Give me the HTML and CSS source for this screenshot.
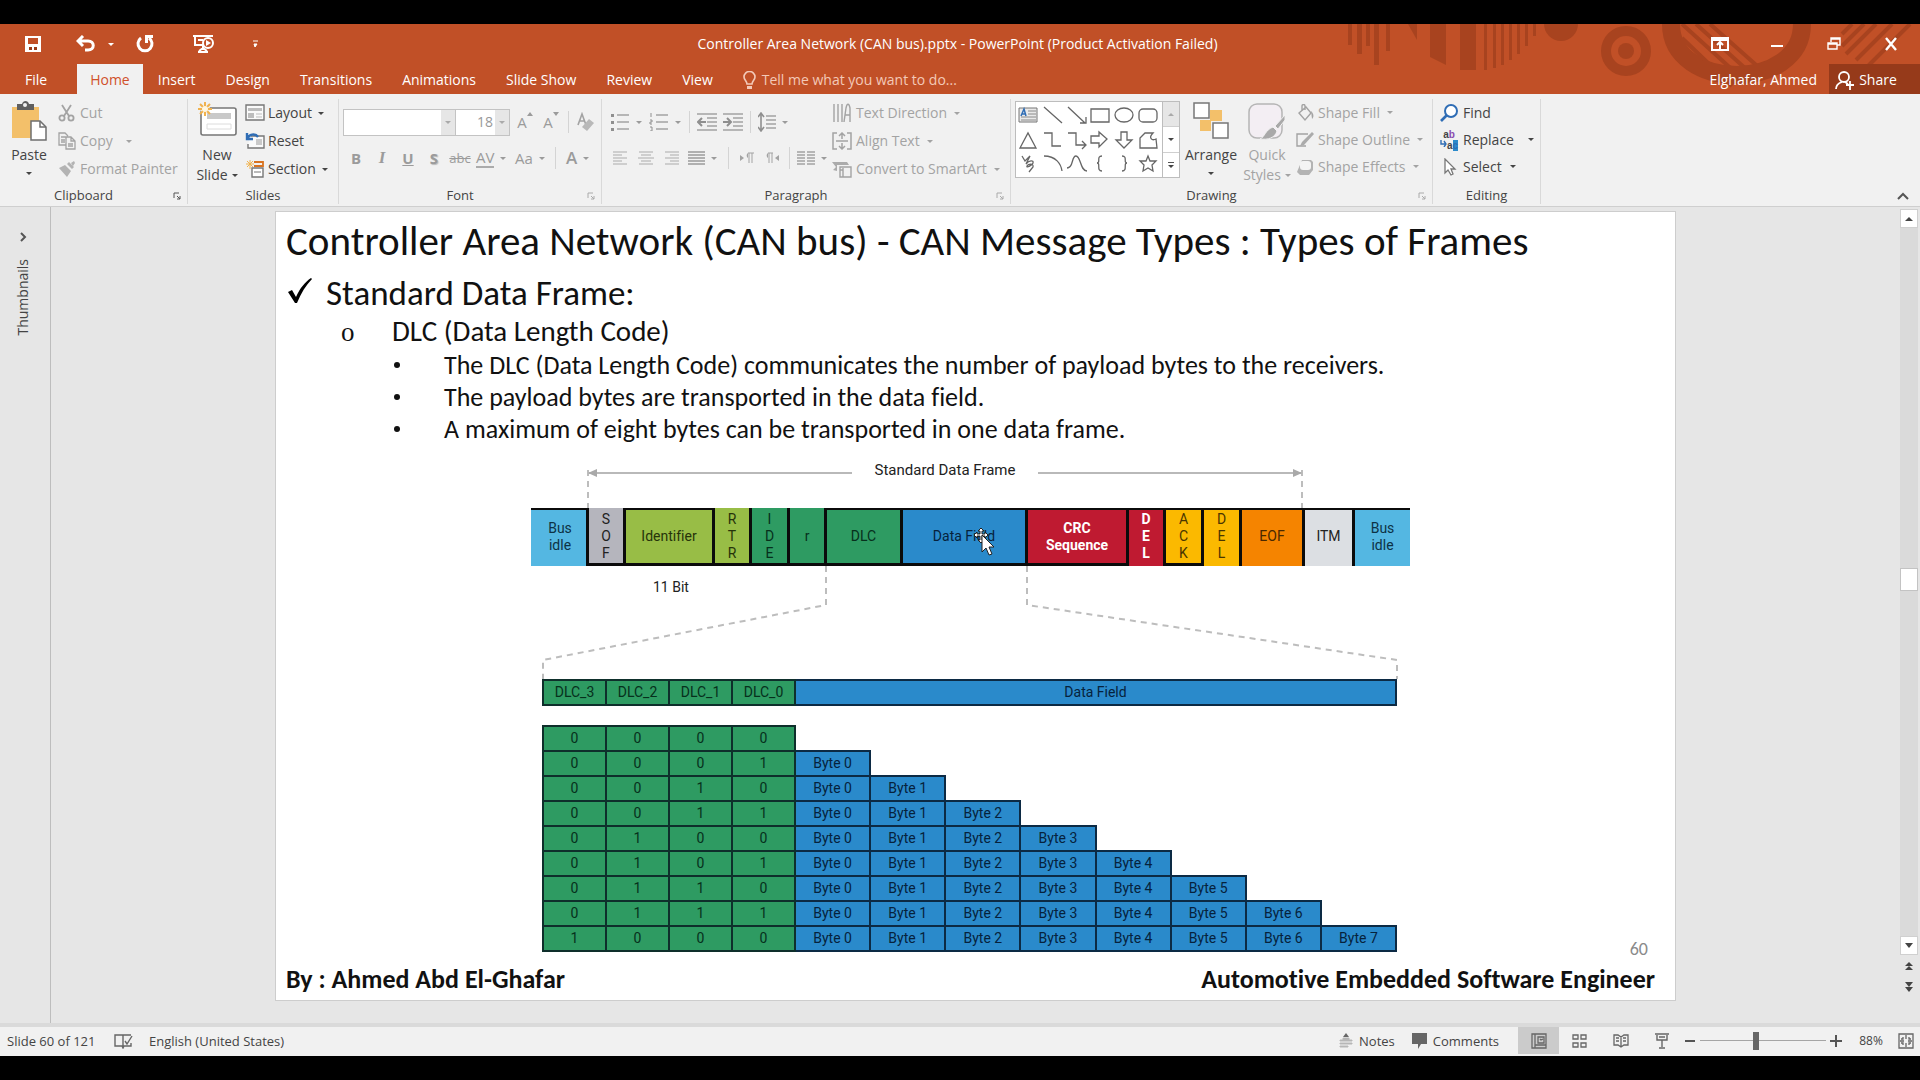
FILE: index.html
```html
<!DOCTYPE html>
<html lang="en">
<head>
<meta charset="utf-8">
<title>Controller Area Network (CAN bus).pptx - PowerPoint</title>
<link rel="stylesheet" href="styles.css">
</head>
<body>
<div class="app">

<header class="top">
  <svg class="art" width="590" height="70" viewBox="0 0 590 70" aria-hidden="true">
    <g fill="#a8431f">
      <path d="M18 0h4v21h-4zM27 0h5v30h-5zM36 0h4v22h-4zM44 0h5v41h-5zM56 0h4v27h-4zM78 0h9v16zM100 0h16v41l-16-8zM130 0h16v46h-16zM154 0h3v46h-3zM163 0h3v44h-3zM171 0h3v41h-3zM179 0h3v36h-3zM187 0h3v30h-3zM195 0h3v22h-3zM203 0h3v12h-3z"/>
      <path d="M214 0a17 17 0 0 0 34 0z"/><circle cx="296" cy="27" r="8"/>
    </g>
    <g fill="none" stroke="#a8431f">
      <circle cx="296" cy="27" r="20" stroke-width="10"/>
      <path d="M341 0C341 68 472 68 472 0" stroke-width="18"/>
      <path d="M352 14L402 62M352 0L418 60M366 0L426 54M380 0L434 48" stroke-width="4"/>
      <path d="M512 10L522 0M512 22L534 0M516 30L546 0M526 36L562 0M536 44L580 0" stroke-width="4"/>
    </g>
  </svg>
  <div class="titlebar">
    <div class="qat">
      <button class="tb" aria-label="Save"><svg width="18" height="18" viewBox="0 0 18 18"><path d="M1 1h16v16H1z" fill="#fff"/><path d="M4 3h10v6H4z" fill="#c15027"/><path d="M5 12h3v3H5zM10 12h3v3h-3z" fill="#9a3a17"/></svg></button>
      <button class="tb undo" aria-label="Undo"><svg width="20" height="18" viewBox="0 0 20 18"><path d="M7 1L2 6l5 5M3 6h9c7 0 7 9 0 9H9" fill="none" stroke="#fff" stroke-width="3"/></svg><i class="caret"></i></button>
      <button class="tb" aria-label="Redo"><svg width="18" height="18" viewBox="0 0 18 18"><path d="M5 3a7 7 0 1 0 8 0" fill="none" stroke="#fff" stroke-width="3"/><path d="M9 0h8v3h-5v5H9z" fill="#fff"/></svg></button>
      <button class="tb" aria-label="Start from beginning"><svg width="22" height="20" viewBox="0 0 22 20"><path d="M1 2h20M3 2v9h10M11 11v5M6 18h10M7 17l4-3 4 3M6 6h5" fill="none" stroke="#fff" stroke-width="2"/><circle cx="16" cy="9" r="5" fill="#c15027" stroke="#fff" stroke-width="2"/><path d="M14 6l5 3-5 3z" fill="#fff"/></svg></button>
      <button class="tb" aria-label="Customize toolbar"><svg width="7" height="9" viewBox="0 0 7 9"><path d="M1 1h5M2 4h3L3 7z" fill="#fff" stroke="#fff"/></svg></button>
    </div>
    <h1 class="doc">Controller Area Network (CAN bus).pptx - PowerPoint (Product Activation Failed)</h1>
    <div class="win">
      <button class="tb" aria-label="Ribbon display options"><svg width="18" height="14" viewBox="0 0 18 14"><path d="M1 1h16v12H1zM1 3h16M9 12V6M6 8l3-3 3 3" fill="none" stroke="#fff" stroke-width="2"/></svg></button>
      <button class="tb" aria-label="Minimize"><svg width="14" height="14" viewBox="0 0 14 14"><path d="M1 9h12" stroke="#fff" stroke-width="2"/></svg></button>
      <button class="tb" aria-label="Restore"><svg width="14" height="14" viewBox="0 0 14 14"><path d="M1 6h9v6H1zM4 5V1h9v7h-3M4 2h9M1 7h9" fill="none" stroke="#fff" stroke-width="1.4"/></svg></button>
      <button class="tb" aria-label="Close"><svg width="14" height="14" viewBox="0 0 14 14"><path d="M2 1l10 12M12 1L2 13" stroke="#fff" stroke-width="2.4"/></svg></button>
    </div>
  </div>
  <div class="tabs">
    <nav class="tabnav">
      <a class="tab file" href="#file">File</a>
      <a class="tab on" href="#home">Home</a>
      <a class="tab" href="#insert">Insert</a>
      <a class="tab" href="#design">Design</a>
      <a class="tab" href="#transitions">Transitions</a>
      <a class="tab" href="#animations">Animations</a>
      <a class="tab" href="#slideshow">Slide Show</a>
      <a class="tab" href="#review">Review</a>
      <a class="tab" href="#view">View</a>
    </nav>
    <button class="tell"><svg width="13" height="19" viewBox="0 0 13 19"><path d="M4 13c0-3-3-4-3-7a5.500 5.500 0 0 1 11 0c0 3-3 4-3 7z" fill="none" stroke="#f3c9b8" stroke-width="1.600"/><path d="M4 15h5v3H4z" fill="#f3c9b8"/></svg>Tell me what you want to do...</button>
    <span class="user">Elghafar, Ahmed</span>
    <button class="share"><svg width="20" height="20" viewBox="0 0 20 20"><circle cx="9" cy="7" r="5" fill="none" stroke="#fff" stroke-width="1.800"/><path d="M1 19c0-4 3-6 6-7M10 12l3 2M15 11v9M11 15h8" fill="none" stroke="#fff" stroke-width="1.800"/></svg>Share</button>
  </div>
</header>

<div class="ribbon">
  <section class="group g-clip">
    <div class="body">
      <button class="big"><svg width="38" height="40" viewBox="0 0 38 40"><path d="M2 6h27v31H2z" fill="#f3c06a"/><path d="M7 3h5c1-4 6-4 7 0h5v6H7z" fill="#5f5f5f"/><circle cx="15" cy="4" r="2" fill="#f1f1f1"/><path d="M21 20h9l6 6v13H21z" fill="#fff" stroke="#6f6f6f" stroke-width="1.500"/><path d="M30 20v6h6" fill="none" stroke="#6f6f6f" stroke-width="1.500"/></svg><span>Paste</span><i class="caret"></i></button>
      <div class="col">
        <button class="cmd off"><svg width="18" height="18" viewBox="0 0 18 18"><g fill="none" stroke="#a3a3a3" stroke-width="1.800"><path d="M4 1l7 11M13 1L6 12"/><circle cx="4" cy="14" r="2.600"/><circle cx="13" cy="14" r="2.600"/></g></svg>Cut</button>
        <button class="cmd off"><svg width="18" height="18" viewBox="0 0 18 18"><path d="M8 13H1V1h6l3 3M3 5h5M3 8h4M3 10h4M8 5h5l4 4v8H8zM13 5v4h4M10 12h5M10 14h5" fill="none" stroke="#a3a3a3" stroke-width="1.300"/></svg>Copy<i class="caret far"></i></button>
        <button class="cmd off"><svg width="18" height="18" viewBox="0 0 18 18"><path d="M1 8l6-3 6 6-4 6zM9 4l2-2 5 5-2 2zM13 3l3-2 1 2-2 3z" fill="#b3b3b3"/></svg>Format Painter</button>
      </div>
    </div>
    <footer class="gl has-launch"><span>Clipboard</span><svg class="launch dark" width="8" height="8" viewBox="0 0 8 8"><path d="M1 6V1h5M4 4l3 3M7 4v3H4" fill="none" stroke="currentColor"/></svg></footer>
  </section>

  <section class="group g-slides">
    <div class="body">
      <button class="big"><svg width="42" height="40" viewBox="0 0 42 40"><rect x="5" y="7" width="35" height="27" rx="2" fill="#fff" stroke="#777" stroke-width="1.600"/><path d="M11 12h24v6H11z" fill="#c9c9c9"/><path d="M11 23h24v5H11z" fill="#fff" stroke="#dcdcdc"/><circle cx="9" cy="8" r="5" fill="#f1f1f1"/><path d="M9 1v14M2 8h14M4 3l10 10M14 3L4 13" stroke="#f0b24e" stroke-width="2"/><circle cx="9" cy="8" r="3" fill="#fff6df"/></svg><span>New</span><span class="line">Slide<i class="caret"></i></span></button>
      <div class="col">
        <button class="cmd"><svg width="20" height="18" viewBox="0 0 20 18"><path d="M1 1h18v15H1z" fill="#fafafa" stroke="#777" stroke-width="1.400"/><path d="M3 4h14v3H3zM3 9h6v5H3z" fill="#bdbdbd"/><path d="M11 10h6M11 13h6" stroke="#bdbdbd"/></svg>Layout<i class="caret"></i></button>
        <button class="cmd"><svg width="20" height="18" viewBox="0 0 20 18"><path d="M6 4h13v12H3v-4" fill="#fafafa" stroke="#777" stroke-width="1.400"/><path d="M11 7h6v6h-6z" fill="#c9c9c9"/><path d="M2 1v6h6M2 7c2-5 8-6 11-2" fill="none" stroke="#2f6db5" stroke-width="2.400"/></svg>Reset</button>
        <button class="cmd"><svg width="20" height="18" viewBox="0 0 20 18"><path d="M7 8h11v9H7z" fill="#fff" stroke="#777" stroke-width="1.400"/><path d="M9 12h7" stroke="#777"/><path d="M9 2h9v4H9" fill="none" stroke="#d9731f" stroke-width="1.800"/><path d="M5 0v9M1 4h8M2 1l6 6M8 1L2 7" stroke="#f0b24e"/></svg>Section<i class="caret"></i></button>
      </div>
    </div>
    <footer class="gl"><span>Slides</span></footer>
  </section>

  <section class="group g-font">
    <div class="rows">
      <div class="row">
        <label class="combo name"><input type="text" aria-label="Font name" value=""><b><i class="caret"></i></b></label>
        <label class="combo size"><input type="text" aria-label="Font size" value="18"><b><i class="caret"></i></b></label>
        <button class="t w26 up" aria-label="Increase font size">A<svg width="6" height="4" viewBox="0 0 6 4"><path d="M0 4l3-4 3 4z" fill="currentColor"/></svg></button>
        <button class="t w26 up" aria-label="Decrease font size">A<svg width="6" height="4" viewBox="0 0 6 4"><path d="M0 0h6L3 4z" fill="currentColor"/></svg></button>
        <i class="sep"></i>
        <button class="t w26" aria-label="Clear formatting"><svg width="18" height="20" viewBox="0 0 18 20"><path d="M1 13L5 2l4 11M3 9h5" fill="none" stroke="#a3a3a3" stroke-width="1.600"/><path d="M5 15l7-8 5 4-7 8z" fill="#b9b9b9"/></svg></button>
      </div>
      <div class="row">
        <button class="t w26 bold">B</button><button class="t w26 ital">I</button><button class="t w26 under">U</button><button class="t w26 shad">S</button><button class="t w26 strike">abc</button>
        <button class="t w38" aria-label="Character spacing"><span class="av">AV</span><i class="caret"></i></button>
        <button class="t w38">Aa<i class="caret"></i></button>
        <i class="sep"></i>
        <button class="t w38 fontcolor" aria-label="Font color">A<i class="caret"></i></button>
      </div>
    </div>
    <footer class="gl has-launch"><span>Font</span><svg class="launch" width="8" height="8" viewBox="0 0 8 8"><path d="M1 6V1h5M4 4l3 3M7 4v3H4" fill="none" stroke="currentColor"/></svg></footer>
  </section>

  <section class="group g-para">
    <div class="body">
    <div class="rows">
      <div class="row">
        <button class="t w38" aria-label="Bullets"><svg width="20" height="18" viewBox="0 0 20 18"><path d="M7 2h12M7 9h12M7 16h12" stroke="#a3a3a3" stroke-width="1.500"/><path d="M1 1h3v3H1zM1 8h3v3H1zM1 15h3v3H1z" fill="#8f8f8f"/></svg><i class="caret"></i></button>
        <button class="t w38" aria-label="Numbering"><svg width="20" height="18" viewBox="0 0 20 18"><path d="M7 2h12M7 9h12M7 16h12" stroke="#a3a3a3" stroke-width="1.500"/><path d="M2 0v4M1 7h2v2H1v2h2M1 14h2v4H1" fill="none" stroke="#8f8f8f"/></svg><i class="caret"></i></button>
        <i class="sep"></i>
        <button class="t w26" aria-label="Decrease indent"><svg width="20" height="18" viewBox="0 0 20 18"><path d="M0 1h20M10 5h10M10 9h10M10 13h10M0 17h20" stroke="#a3a3a3" stroke-width="1.500"/><path d="M9 9H2M5 5L1 9l4 4" fill="none" stroke="#8f8f8f" stroke-width="2"/></svg></button>
        <button class="t w26" aria-label="Increase indent"><svg width="20" height="18" viewBox="0 0 20 18"><path d="M0 1h20M10 5h10M10 9h10M10 13h10M0 17h20" stroke="#a3a3a3" stroke-width="1.500"/><path d="M0 9h7M4 5l4 4-4 4" fill="none" stroke="#8f8f8f" stroke-width="2"/></svg></button>
        <i class="sep"></i>
        <button class="t w38" aria-label="Line spacing"><svg width="18" height="20" viewBox="0 0 18 20"><path d="M8 4h10M8 8h10M8 12h10M8 16h10" stroke="#a3a3a3" stroke-width="1.500"/><path d="M3 1v18M0 5l3-4 3 4M0 15l3 4 3-4" fill="none" stroke="#8f8f8f" stroke-width="1.600"/></svg><i class="caret"></i></button>
      </div>
      <div class="row">
        <button class="t w26" aria-label="Align left"><svg width="16" height="14" viewBox="0 0 16 14"><path d="M1 1h14M1 4h9M1 7h14M1 10h9M1 13h14" stroke="#c2c2c2" stroke-width="1.700"/></svg></button>
        <button class="t w26" aria-label="Center"><svg width="16" height="14" viewBox="0 0 16 14"><path d="M1 1h14M3 4h10M0 7h16M3 10h10M1 13h14" stroke="#c2c2c2" stroke-width="1.700"/></svg></button>
        <button class="t w26" aria-label="Align right"><svg width="16" height="14" viewBox="0 0 16 14"><path d="M1 1h14M6 4h9M1 7h14M6 10h9M1 13h14" stroke="#c2c2c2" stroke-width="1.700"/></svg></button>
        <button class="t w38" aria-label="Justify"><svg width="17" height="14" viewBox="0 0 17 14"><path d="M0 1h17M0 4h17M0 7h17M0 10h17M0 13h17" stroke="#9b9b9b" stroke-width="1.500"/></svg><i class="caret"></i></button>
        <i class="sep"></i>
        <button class="t w26" aria-label="Left to right"><svg width="15" height="12" viewBox="0 0 15 12"><path d="M1 3l4 3-4 3zM9 1a3 3 0 0 0 0 5z" fill="#a3a3a3"/><path d="M9 1h6M10 1v10M13 1v10" stroke="#a3a3a3"/></svg></button>
        <button class="t w26" aria-label="Right to left"><svg width="15" height="12" viewBox="0 0 15 12"><path d="M14 3l-4 3 4 3zM3 1a3 3 0 0 0 0 5z" fill="#a3a3a3"/><path d="M3 1h5M4 1v10M7 1v10" stroke="#a3a3a3"/></svg></button>
        <i class="sep"></i>
        <button class="t w38" aria-label="Columns"><svg width="18" height="14" viewBox="0 0 18 14"><path d="M0 1h8M0 4h8M0 7h8M0 10h8M0 13h8M10 1h8M10 4h8M10 7h8M10 10h8M10 13h8" stroke="#a3a3a3" stroke-width="1.500"/></svg><i class="caret"></i></button>
      </div>
    </div>
    <div class="col">
      <button class="cmd off"><svg width="20" height="20" viewBox="0 0 20 20"><path d="M2 1v18M6 1v18M10 1v18M12 19l2-14c1-5 3-5 4 0v14M13 12h5" fill="none" stroke="#a3a3a3" stroke-width="1.400"/></svg>Text Direction<i class="caret"></i></button>
      <button class="cmd off"><svg width="20" height="18" viewBox="0 0 20 18"><path d="M5 1H1v16h4M15 1h4v16h-4M4 9h12M10 1v6M10 11v6M7 4l3-3 3 3M7 14l3 3 3-3" fill="none" stroke="#a3a3a3" stroke-width="1.500"/></svg>Align Text<i class="caret"></i></button>
      <button class="cmd off"><svg width="20" height="18" viewBox="0 0 20 18"><path d="M0 2h15l2 3H5v6L1 10l3-3z" fill="#ababab"/><path d="M8 7h11v10H8zM8 10h3M11 8v9" fill="none" stroke="#a3a3a3" stroke-width="1.400"/></svg>Convert to SmartArt<i class="caret"></i></button>
    </div>
    </div>
    <footer class="gl has-launch"><span>Paragraph</span><svg class="launch" width="8" height="8" viewBox="0 0 8 8"><path d="M1 6V1h5M4 4l3 3M7 4v3H4" fill="none" stroke="currentColor"/></svg></footer>
  </section>

  <section class="group g-draw">
    <div class="body">
      <div class="gallery">
        <svg class="shapes" width="146" height="75" viewBox="0 0 146 75" aria-label="Shapes">
          <path d="M3 6h18v14H3z" fill="#e9e9e9" stroke="#777"/><path d="M12 9h8M12 12h8M5 15h15M5 18h15" stroke="#8a8a8a"/><path d="M5 14l3-7 2 7M6 12h4" stroke="#2f6db5" stroke-width="1.500" fill="none"/>
          <g fill="none" stroke="#666" stroke-width="1.300">
            <path d="M28 5l18 16M52 5l17 16M64 21h6v-6M75 7h18v13H75zM4 46l8-15 8 15zM28 31h8v13h9M52 31h8v12h9M66 39l4 4-4 4"/>
            <ellipse cx="108" cy="13" rx="9" ry="7"/><rect x="123" y="7" width="18" height="13" rx="4"/>
            <path d="M75 34h8v-4l8 7-8 8v-4h-8zM105 30h6v8h5l-8 8-8-8h5zM124 46V36l5-5h8c-5 5-1 8 3 6l1 9z"/>
            <path d="M6 54l3 5 5-5-4 8c3-4 8-4 7-1s-7 5-6 3 7-3 6 1l-4 5M28 54c12 0 17 8 18 15M51 66c7 0 4-12 9-12s4 15 11 15M86 54c-6 0-1 7-5 7 4 0-1 8 5 8M106 54c6 0 1 7 5 7-4 0 1 8-5 8"/>
            <path d="M132 54l2 5h6l-4 4 1 6-5-3-5 3 1-6-4-4h6z"/>
          </g>
        </svg>
        <div class="gbtns"><button class="gb dis" aria-label="Previous shapes"><i class="caret upc"></i></button><button class="gb" aria-label="Next shapes"><i class="caret"></i></button><button class="gb more" aria-label="More shapes"><i class="caret"></i></button></div>
      </div>
      <button class="big arr"><svg width="38" height="40" viewBox="0 0 38 40"><path d="M18 9h12v11H18zM8 19h11v11H8z" fill="#f3c06a"/><path d="M2 2h15v15H2zM21 22h15v15H21z" fill="#fff" stroke="#777" stroke-width="1.500"/></svg><span>Arrange</span><i class="caret"></i></button>
      <button class="big off"><svg width="38" height="40" viewBox="0 0 38 40"><rect x="1" y="3" width="33" height="34" rx="8" fill="#f3eef3" stroke="#b5b5b5" stroke-width="1.500"/><path d="M37 14L27 25l3 3 7-9zM25 26l4 4c-2 7-9 9-17 8 5-2 5-9 13-12z" fill="#a9a9a9" stroke="#f1f1f1"/></svg><span>Quick</span><span class="line">Styles<i class="caret"></i></span></button>
      <div class="col">
        <button class="cmd off"><svg width="18" height="18" viewBox="0 0 18 18"><path d="M3 9l7-6 5 6-6 7zM6 7V2c0-2 3-2 3 0v4" fill="none" stroke="#a3a3a3" stroke-width="1.400"/><path d="M15 7c3 3 3 6 1 8z" fill="#a3a3a3"/></svg>Shape Fill<i class="caret"></i></button>
        <button class="cmd off"><svg width="18" height="18" viewBox="0 0 18 18"><path d="M12 3H1v12h9" fill="none" stroke="#a3a3a3" stroke-width="1.400"/><path d="M16 1l2 2L8 14l-4 1 2-4z" fill="#ababab"/></svg>Shape Outline<i class="caret"></i></button>
        <button class="cmd off"><svg width="18" height="18" viewBox="0 0 18 18"><path d="M6 2h9l2 2v8l-4 5H4l-3-3z" fill="#b3b3b3"/><rect x="4" y="3" width="11" height="9" rx="3" fill="#f4f4f4"/></svg>Shape Effects<i class="caret"></i></button>
      </div>
    </div>
    <footer class="gl has-launch"><span>Drawing</span><svg class="launch" width="8" height="8" viewBox="0 0 8 8"><path d="M1 6V1h5M4 4l3 3M7 4v3H4" fill="none" stroke="currentColor"/></svg></footer>
  </section>

  <section class="group g-edit">
    <div class="body">
      <div class="col">
        <button class="cmd"><svg width="18" height="18" viewBox="0 0 18 18"><circle cx="11" cy="7" r="6" fill="#fff" stroke="#2f6db5" stroke-width="2"/><path d="M7 11l-6 6" stroke="#2f6db5" stroke-width="2.600"/></svg>Find</button>
        <button class="cmd"><span class="abac"><span>a<em>b</em></span><span class="to"><svg width="7" height="7" viewBox="0 0 7 7"><path d="M1 0v4h5M4 1l2 3-2 3" fill="none" stroke="#2f6db5" stroke-width="1.400"/></svg>a<em class="blue">c</em></span></span>Replace<i class="caret far"></i></button>
        <button class="cmd"><svg width="18" height="18" viewBox="0 0 18 18"><path d="M5 1v14l3-3 3 5 2-1-2-5h4z" fill="#fff" stroke="#777" stroke-width="1.300"/></svg>Select<i class="caret"></i></button>
      </div>
    </div>
    <footer class="gl"><span>Editing</span></footer>
  </section>
  <button class="collapse" aria-label="Collapse the ribbon"><svg width="12" height="8" viewBox="0 0 12 8"><path d="M1 7l5-5 5 5" fill="none" stroke="#555" stroke-width="2"/></svg></button>
</div>

<main class="work">
  <aside class="thumbs">
    <svg width="8" height="10" viewBox="0 0 8 10"><path d="M2 1l4 4-4 4" fill="none" stroke="#555" stroke-width="2"/></svg>
    <span class="vert">Thumbnails</span>
  </aside>
  <div class="stage">
    <article class="slide">
      <h2 class="s-title">Controller Area Network (CAN bus) - CAN Message Types : Types of Frames</h2>
      <ul class="l1">
        <li><svg class="mark" width="24" height="26" viewBox="0 0 24 26"><path d="M0 14l4-2 4 7C12 10 17 4 23 0l1 1C18 7 13 15 9 25H7z"/></svg><p>Standard Data Frame:</p>
          <ul class="l2">
            <li><span class="mark">o</span><p>DLC (Data Length Code)</p>
              <ul class="l3">
                <li>The DLC (Data Length Code) communicates the number of payload bytes to the receivers.</li>
                <li>The payload bytes are transported in the data field.</li>
                <li>A maximum of eight bytes can be transported in one data frame.</li>
              </ul>
            </li>
          </ul>
        </li>
      </ul>
      <div class="figrow">
        <figure class="fig">
          <div class="span">
            <svg class="arrow" viewBox="0 0 265 38" width="265" height="38"><g fill="none" stroke="#b9b9b9"><path d="M2 3h263" stroke-width="2"/><path d="M1 0v38" stroke="#bdbdbd" stroke-width="2" stroke-dasharray="6 5"/></g><path d="M1 3l9-4v8z" fill="#a9a9a9"/></svg>
            <span class="cap">Standard Data Frame</span>
            <svg class="arrow" viewBox="0 0 265 38" width="265" height="38"><g fill="none" stroke="#b9b9b9"><path d="M0 3h263" stroke-width="2"/><path d="M264 0v38" stroke="#bdbdbd" stroke-width="2" stroke-dasharray="6 5"/></g><path d="M264 3l-9-4v8z" fill="#a9a9a9"/></svg>
          </div>
          <div class="frame">
            <div class="c sky t1 nl">Bus<br>idle</div>
            <div class="c gray b1">S<br>O<br>F</div>
            <div class="c lime t1 b1">Identifier</div>
            <div class="c lime b1">R<br>T<br>R</div>
            <div class="c green b1">I<br>D<br>E</div>
            <div class="c green b1">r</div>
            <div class="c green t1 b1">DLC</div>
            <div class="c blue t1 b1">Data Field
              <svg class="pointer" width="24" height="30" viewBox="0 0 24 30"><path d="M8 1l3 3H9v3h3V5l3 3-3 3V9H9v4h2l-3 3-3-3h2V9H4v2L1 8l3-3v2h3V4H5z" fill="#fff" stroke="#222"/><path d="M9 8v17l4-4 3 7 3-1-3-7h5z" fill="#fff" stroke="#222"/></svg>
            </div>
            <div class="c red t1 b1">CRC<br>Sequence</div>
            <div class="c red t1">D<br>E<br>L</div>
            <div class="c gold t1 b1">A<br>C<br>K</div>
            <div class="c gold t1">D<br>E<br>L</div>
            <div class="c orange t1">EOF</div>
            <div class="c pale t1">ITM</div>
            <div class="c sky t1">Bus<br>idle</div>
          </div>
          <div class="link">
            <svg width="879" height="113" viewBox="0 0 879 113"><path d="M295 0v39L12 94v19M496 0v39l370 55v19" fill="none" stroke="#bdbdbd" stroke-width="2" stroke-dasharray="6 5"/></svg>
            <span class="bits">11 Bit</span>
          </div>
          <table class="codes">
            <colgroup><col class="cd" span="4"><col span="8"></colgroup>
            <thead>
              <tr><th>DLC_3</th><th>DLC_2</th><th>DLC_1</th><th>DLC_0</th><th class="by" colspan="8">Data Field</th></tr>
            </thead>
            <tbody>
              <tr class="gap"><td colspan="12"></td></tr>
              <tr><td>0</td><td>0</td><td>0</td><td>0</td></tr>
              <tr><td>0</td><td>0</td><td>0</td><td>1</td><td class="by">Byte 0</td></tr>
              <tr><td>0</td><td>0</td><td>1</td><td>0</td><td class="by">Byte 0</td><td class="by">Byte 1</td></tr>
              <tr><td>0</td><td>0</td><td>1</td><td>1</td><td class="by">Byte 0</td><td class="by">Byte 1</td><td class="by">Byte 2</td></tr>
              <tr><td>0</td><td>1</td><td>0</td><td>0</td><td class="by">Byte 0</td><td class="by">Byte 1</td><td class="by">Byte 2</td><td class="by">Byte 3</td></tr>
              <tr><td>0</td><td>1</td><td>0</td><td>1</td><td class="by">Byte 0</td><td class="by">Byte 1</td><td class="by">Byte 2</td><td class="by">Byte 3</td><td class="by">Byte 4</td></tr>
              <tr><td>0</td><td>1</td><td>1</td><td>0</td><td class="by">Byte 0</td><td class="by">Byte 1</td><td class="by">Byte 2</td><td class="by">Byte 3</td><td class="by">Byte 4</td><td class="by">Byte 5</td></tr>
              <tr><td>0</td><td>1</td><td>1</td><td>1</td><td class="by">Byte 0</td><td class="by">Byte 1</td><td class="by">Byte 2</td><td class="by">Byte 3</td><td class="by">Byte 4</td><td class="by">Byte 5</td><td class="by">Byte 6</td></tr>
              <tr><td>1</td><td>0</td><td>0</td><td>0</td><td class="by">Byte 0</td><td class="by">Byte 1</td><td class="by">Byte 2</td><td class="by">Byte 3</td><td class="by">Byte 4</td><td class="by">Byte 5</td><td class="by">Byte 6</td><td class="by">Byte 7</td></tr>
            </tbody>
          </table>
        </figure>
        <span class="num">60</span>
      </div>
      <footer class="s-foot"><span>By : Ahmed Abd El-Ghafar</span><span>Automotive Embedded Software Engineer</span></footer>
    </article>
  </div>
  <div class="scroll">
    <button class="sb" aria-label="Scroll up"><i class="caret upc wide"></i></button>
    <div class="track"><div class="thumb"></div></div>
    <button class="sb" aria-label="Scroll down"><i class="caret wide"></i></button>
    <button class="sp" aria-label="Previous slide"><i class="caret upc wide"></i><i class="caret upc wide"></i></button>
    <button class="sp" aria-label="Next slide"><i class="caret wide"></i><i class="caret wide"></i></button>
  </div>
</main>

<footer class="status">
  <span class="st-slide">Slide 60 of 121</span>
  <svg class="st-spell" width="19" height="16" viewBox="0 0 19 16"><path d="M9 2v13M9 2H1v11h7l1 2 1-2h7v-3M9 2h8M11 8l2 3 5-8" fill="none" stroke="#666" stroke-width="1.400"/></svg>
  <span>English (United States)</span>
  <button class="st-btn notes"><svg width="14" height="16" viewBox="0 0 14 16"><path d="M4 4l3-4 3 4z" fill="#666"/><path d="M1 7h12v1H1zM1 10h12v1H1zM1 13h8v1H1zM4 5h6v2H4z" fill="#b0b0b0" stroke="#b8b8b8"/></svg>Notes</button>
  <button class="st-btn comments"><svg width="16" height="16" viewBox="0 0 16 16"><path d="M0 0h15v11H9l-3 5v-5H0z" fill="#666"/></svg>Comments</button>
  <div class="views">
    <button class="vw on" aria-label="Normal"><svg width="16" height="16" viewBox="0 0 16 16"><path d="M1 1h14v14H1zM4 1v14M7 4h6v6H7zM4 12h11M9 6l1 1 2-1" fill="none" stroke="#666" stroke-width="1.300"/></svg></button>
    <button class="vw" aria-label="Slide sorter"><svg width="16" height="14" viewBox="0 0 16 14"><path d="M1 1h5v4H1zM9 1h5v4H9zM1 9h5v4H1zM9 9h5v4H9z" fill="none" stroke="#666" stroke-width="1.300"/></svg></button>
    <button class="vw" aria-label="Reading view"><svg width="16" height="15" viewBox="0 0 16 15"><path d="M8 3v11M1 2h4l3 2 3-2h4v10h-4l-3 2-3-2H1zM3 5h3M3 8h3M10 5h3M10 8h3" fill="none" stroke="#666" stroke-width="1.300"/></svg></button>
    <button class="vw" aria-label="Slide show"><svg width="14" height="16" viewBox="0 0 14 16"><path d="M0 1h14M2 2v5h10V2M7 7v7M4 15h6M4 4h6" fill="none" stroke="#666" stroke-width="1.400"/></svg></button>
  </div>
  <button class="zb" aria-label="Zoom out"><svg width="10" height="10" viewBox="0 0 10 10"><path d="M0 5h10" stroke="#555" stroke-width="2"/></svg></button>
  <input class="zoom" type="range" min="0" max="100" value="44" aria-label="Zoom">
  <button class="zb" aria-label="Zoom in"><svg width="12" height="12" viewBox="0 0 12 12"><path d="M0 6h12M6 0v12" stroke="#555" stroke-width="2"/></svg></button>
  <span class="pct">88%</span>
  <button class="fit" aria-label="Fit slide to window"><svg width="16" height="16" viewBox="0 0 16 16"><path d="M1 1h14v14H1zM8 2v4M8 10v4M2 8h4M10 8h4M5 4v2H3M11 4v2h2M5 12v-2H3M11 12v-2h2" fill="none" stroke="#666" stroke-width="1.300"/></svg></button>
</footer>
</div>
</body>
</html>
```
FILE: styles.css
```css
*{box-sizing:border-box}
body{margin:0;padding:24px 0;min-height:100vh;background:#000;font-family:"Open Sans","Noto Sans",sans-serif;font-size:14px;line-height:20px;color:#444;display:flex;flex-direction:column}
button{font:inherit;color:inherit;background:none;border:0;padding:0;margin:0;display:flex;align-items:center;justify-content:center;white-space:nowrap}
svg{flex:none;display:block}
h1,h2,p,ul,figure{margin:0;padding:0}
ul{list-style:none}
.app{flex:1;display:flex;flex-direction:column;background:#e6e6e6}
.caret{flex:none;border:3px solid transparent;border-top:3px solid currentColor;border-bottom:0;width:0;height:0}
.caret.upc{border-top:0;border-bottom:3px solid currentColor}
.caret.wide{border-width:4px;border-top-width:0;border-bottom-width:4px}
.caret.wide:not(.upc){border-top-width:5px;border-bottom-width:0}

/* title bar and tabs */
.top{position:relative;background:#c15027;color:#fff}
.art{position:absolute;right:0;top:0}
.titlebar,.tabs{position:relative;display:flex;align-items:center}
.titlebar{height:40px}
.qat{flex:1;display:flex;align-items:center;padding-left:24px}
.qat .tb{margin-right:38px}
.qat .tb:first-child{margin-right:34px}
.qat .undo{margin-right:22px;gap:12px}
.doc{font-size:14px;font-weight:400;margin-right:28px}
.win{flex:1;display:flex;justify-content:flex-end;padding-right:1px}
.win .tb{width:57px;height:38px}
.tabs{height:30px}
.tabnav{display:flex;align-self:stretch}
.tab{display:flex;align-items:center;padding:2px 15px 0;color:#fff;text-decoration:none}
.tab.file{padding:2px 30px 0 25px}
.tab.on{background:#f1f1f1;color:#d0502a;padding:2px 13px 0}
.tell{gap:6px;color:#f3c9b8;margin-left:15px;padding-top:2px}
.user{margin-left:auto;padding-top:2px}
.share{background:#963a1a;align-self:stretch;gap:4px;width:91px;margin-left:12px;padding:2px 17px 0 0}

/* ribbon */
.ribbon{display:flex;background:#f1f1f1;border-bottom:1px solid #cfcfcf;height:113px}
.group{display:flex;flex-direction:column;border-right:1px solid #d9d9d9;margin:5px 0 2px;flex:none}
.g-clip{width:188px}.g-slides{width:151px}.g-font{width:263px}.g-para{width:409px}.g-draw{width:422px}.g-edit{width:108px}
.body{display:flex;flex:1}
.gl{display:flex;justify-content:center;align-items:center;font-size:13px;line-height:18px;position:relative}
.has-launch{padding-right:20px}
.launch{position:absolute;right:6px;top:6px;color:#aaa}
.launch.dark{color:#555}
.col{display:flex;flex-direction:column}
.cmd{height:28px;justify-content:flex-start;gap:3px}
.cmd .caret{margin-left:3px}
.cmd .caret.far{margin-left:9px}
.off{color:#a3a3a3}
.big{flex-direction:column;justify-content:flex-start;align-items:center;padding-top:2px;line-height:20px}
.big svg{margin-bottom:4px}
.big>.caret{margin-top:7px}
.line{display:flex;align-items:center;gap:4px}
.g-clip .big{width:58px}
.g-clip .cmd{gap:4px}
.g-slides .big{width:54px;margin:0 1px 0 2px}
.g-font .rows{padding-left:4px;flex:1}
.g-para .rows{padding-left:5px;width:229px}
.g-para .col{margin-left:1px}
.g-para .cmd{gap:4px}
.row{display:flex;align-items:center;height:36px}
.rows .row:first-child{margin-top:5px}
.combo{display:flex;height:27px;border:1px solid #c3c3c3;background:#fff}
.combo.name{width:113px}
.combo.size{width:55px;margin-left:-1px;margin-right:2px}
.combo input{flex:1;min-width:0;border:0;background:none;font:inherit;color:#999;text-align:right;padding:0 2px}
.combo b{width:14px;background:#e6e6e6;display:flex;align-items:center;justify-content:center;color:#aaa}
.t{color:#9b9b9b;height:28px;font-size:15px;flex:none}
.w26{width:26px}
.w38{width:39px;justify-content:flex-start;padding-left:3px;gap:6px}
.up{align-items:flex-start;padding-top:4px}
.bold{font-weight:700}
.ital{font-style:italic;font-family:"Liberation Serif",serif;font-weight:700;font-size:17px}
.under{text-decoration:underline;font-weight:700}
.shad{font-weight:700;text-shadow:1px 1px 1px #bbb}
.strike{text-decoration:line-through;font-size:13px}
.av{border-bottom:2px solid #ababab;line-height:17px}
.fontcolor{font-size:17px;font-weight:600;padding-left:6px}
.sep{width:1px;height:22px;background:#d4d4d4;margin:0 4px;flex:none}
.gallery{display:flex;height:77px;border:1px solid #bdbdbd;background:#fff;margin:2px 0 0 4px;width:165px}
.gbtns{display:flex;flex-direction:column;border-left:1px solid #bdbdbd;flex:1}
.gb{flex:1;border-bottom:1px solid #cfcfcf}
.gb:last-child{border-bottom:0}
.gb.dis{background:#e6e6e6;color:#aaa}
.gb.more{flex-direction:column;gap:2px}
.gb.more::before{content:"";width:6px;height:1px;background:#555}
.g-draw .big{width:58px}
.g-draw .arr{margin:0 -2px 0 2px}
.g-draw .cmd,.g-edit .cmd{height:27px}
.g-draw .cmd{gap:4px}
.g-edit .col{padding-left:7px}
.g-edit .cmd{gap:5px}
.abac{width:18px;font:bold 10px/11px "Liberation Sans",sans-serif;display:flex;flex-direction:column}
.abac em{font-style:normal;color:#8a4bb0}
.abac .to{display:flex}
.abac .blue{color:#2f6db5}
.collapse{margin:auto 10px 4px auto;width:14px;height:12px}

/* work area */
.work{flex:1;display:grid;grid-template-columns:51px 1fr 22px}
.thumbs{border-right:1px solid #bdbdbd;display:flex;flex-direction:column;align-items:center;padding:25px 4px 0 0;gap:17px}
.vert{writing-mode:vertical-rl;transform:rotate(180deg);line-height:20px}
.stage{display:flex;justify-content:center;align-items:flex-start;padding:4px 24px 22px 26px}
.slide{width:100%;max-width:1401px;background:#fff;border:1px solid #cdcdcd;padding:4px 20px 3px 10px;color:#111;font-family:Carlito,Lato,sans-serif;font-variant-ligatures:none}
.s-title{font-size:41px;line-height:50px;font-weight:400;margin-bottom:7px}
.l1>li,.l2>li{position:relative;padding-left:40px}
.l1 p{font-size:35px;line-height:41px}
.l2 p{font-size:29px;line-height:35px}
.l2>li{padding-left:66px}
.l3{font-size:26px;line-height:32px}
.l3 li{padding-left:52px;position:relative}
.l3 li::before{content:"";position:absolute;left:2px;top:13px;width:6px;height:6px;border-radius:3px;background:#111}
.mark{position:absolute;left:2px;top:5px}
.l2 .mark{left:15px;top:0;font:27px/36px "Liberation Serif",serif}
.figrow{display:flex;justify-content:space-between;align-items:flex-end}
.fig{width:100%;max-width:879px;margin:25px 0 9px 245px;font-family:Roboto,sans-serif;font-size:14px;color:#222}
.span{display:flex;justify-content:space-between;margin:0 107px 0 56px;font-size:15px;line-height:20px}
.cap{margin-top:-10px}
.arrow{overflow:visible}
.frame{display:grid;grid-template-columns:55fr 37fr 89fr 37fr 38fr 37fr 76fr 125fr 101fr 37fr 38fr 38fr 63fr 50fr 58fr}
.c{--l:#0b0b0b;--t:transparent;--b:transparent;min-width:0;height:58px;padding:1px 0 2px 3px;box-shadow:inset 3px 0 var(--l),inset 0 2px var(--t),inset 0 -3px var(--b);display:flex;align-items:center;justify-content:center;text-align:center;line-height:17px;position:relative}
.c.nl{--l:transparent}
.c.t1{--t:#0b0b0b}
.c.b1{--b:#0b0b0b}
.sky{background:#54b7e2;color:#0d3245}.gray{background:#b5b5bd}.lime{background:#98bd46;color:#26330a}
.green{background:#2e9b62;color:#06301c}.blue{background:#2a8acb;color:#06223c}
.red{background:#bf1a31;color:#fff;font-weight:700}.gold{background:#fbb900;color:#4a3500}
.orange{background:#f58400;color:#4a2800}.pale{background:#dcdfe3}
.pointer{position:absolute;left:73px;top:19px}
.link{position:relative}
.bits{position:absolute;left:122px;top:12px;line-height:18px}
.codes{border-collapse:collapse;table-layout:fixed;width:855px;margin-left:11px;line-height:17px}
.codes .cd{width:63px}
.codes tr{height:25px}
.codes th,.codes td{padding:0;font-weight:400;text-align:center;border:2px solid #0e2f2b;background:#2e9b62;color:#06301c}
.codes .by{background:#2a8acb;color:#06223c;border-color:#0c2a44}
.codes .gap{height:21px}
.codes .gap td{background:none;border-left:0;border-right:0;border-bottom:0}
.num{font-size:18px;line-height:20px;color:#8a8a8a;margin:0 7px 2px 0;position:relative}
.s-foot{display:flex;justify-content:space-between;font-size:26px;line-height:36px;font-weight:700}
.scroll{display:flex;flex-direction:column;align-items:center;padding:2px 0 0}
.sb{width:18px;height:19px;background:#fff;border:1px solid #d0d0d0}
.track{flex:1;width:18px;background:#dadada;display:flex;flex-direction:column;justify-content:center;padding-bottom:5px}
.thumb{height:23px;background:#fff;border:1px solid #c3c3c3}
.sp{flex-direction:column;height:21px}
.sp:last-child{margin-bottom:26px}

/* status bar */
.status{display:flex;align-items:center;height:33px;background:#f1f1f1;border-top:4px solid #dadada;font-size:13px;padding:0 0 2px 7px}
.st-slide{width:107px}
.st-spell{margin-right:16px}
.st-btn{gap:6px}
.notes{margin-left:auto;margin-right:17px}
.comments{gap:5px;margin-right:19px}
.views{display:flex;align-self:stretch}
.vw{width:41px}
.vw.on{background:#cbcbcb}
.zb{width:16px}
.zoom{appearance:none;width:126px;height:20px;margin:0 2px;background:linear-gradient(#a5a5a5,#a5a5a5) center/100% 1px no-repeat}
.zoom::-webkit-slider-thumb{appearance:none;width:6px;height:18px;background:#666}
.pct{width:30px;text-align:center;margin:0 12px 0 12px;font-size:12px}
.fit{margin-right:6px}
```
